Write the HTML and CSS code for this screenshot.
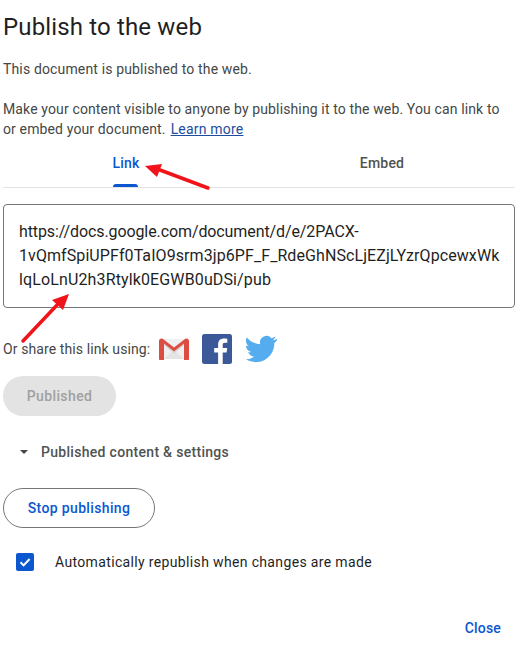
FILE: index.html
```html
<!DOCTYPE html>
<html lang="en">
<head>
<meta charset="utf-8">
<title>Publish to the web</title>
<link rel="stylesheet" href="styles.css">
</head>
<body>
<main class="dialog">
  <h1 class="title">Publish to the web</h1>
  <p class="status">This document is published to the web.</p>
  <div class="intro">
    <p class="intro-line">Make your content visible to anyone by publishing it to the web. You can link to</p>
    <p class="intro-line"><span>or embed your document.</span><a class="learn" href="#">Learn more</a></p>
  </div>
  <div class="tabs">
    <div class="tab tab-active"><span class="tab-label">Link</span></div>
    <div class="tab tab-other"><span class="tab-label">Embed</span></div>
  </div>
  <div class="linkbox"><span class="url-a">https://docs.google.com/document/d/e/2PACX-</span><br><span class="url-b">1vQmfSpiUPFf0TaIO9srm3jp6PF_F_RdeGhNScLjEZjLYzrQpcewxWk</span><br><span class="url-c">lqLoLnU2h3Rtylk0EGWB0uDSi/pub</span></div>
  <div class="share">
    <span class="share-text">Or share this link using:</span>
    <svg class="icon-gmail" viewBox="0 0 30 22" width="30" height="22" aria-label="Gmail">
      <path d="M2 1h26v20H2z" fill="#f0f0f0"/>
      <path d="M5 21 15 12l10 9z" fill="#e4e4e4"/>
      <path d="M5 5 15 14 25 5v2L15 15.500 5 7z" fill="#d4d4d4"/>
      <path d="M0 3c0-2 2-3 4-2l11 8.500L26 1c2-1 4 0 4 2v18c0 .6-.4 1-1 1h-4V5.500L15 13.500 5 5.500V22H1c-.6 0-1-.4-1-1z" fill="#dc4e41"/>
    </svg>
    <svg class="icon-fb" viewBox="0 0 30 30" width="30" height="30" aria-label="Facebook">
      <rect width="30" height="30" rx="2.500" fill="#3b5998"/>
      <path d="M20.700 30V18.400h3.900l.6-4.500h-4.500V11c0-1.300.4-2.200 2.200-2.200h2.400v-4c-.4-.1-1.800-.2-3.400-.2-3.400 0-5.800 2.100-5.800 5.900v3.400h-3.900v4.500h3.900V30z" fill="#fff"/>
    </svg>
    <svg class="icon-tw" viewBox="0 0 24 24" width="32" height="32" aria-label="Twitter">
      <path d="M23.600 4.600c-.9.4-1.800.7-2.800.8 1-.6 1.800-1.500 2.100-2.700-.9.6-2 1-3.100 1.200a4.900 4.900 0 0 0-8.400 4.500C7.400 8.200 3.800 6.200 1.400 3.300a4.900 4.900 0 0 0 1.500 6.600c-.8 0-1.600-.2-2.200-.6v.1c0 2.400 1.700 4.400 3.900 4.800-.7.2-1.500.2-2.200.1.600 2 2.400 3.400 4.600 3.400A9.900 9.900 0 0 1 .5 19.700a13.900 13.900 0 0 0 7.500 2.200c9 0 14-7.500 14-14v-.6c1-.7 1.800-1.600 2.500-2.600z" fill="#55acee"/>
    </svg>
  </div>
  <button class="btn-published" type="button">Published</button>
  <div class="disclosure">
    <span class="caret"></span>
    <span class="disclosure-text">Published content &amp; settings</span>
  </div>
  <button class="btn-stop" type="button">Stop publishing</button>
  <label class="auto">
    <span class="checkbox">
      <svg viewBox="0 0 18 18" width="18" height="18"><path d="M4.500 9.300 7.600 12.400 13.600 6" fill="none" stroke="#fff" stroke-width="2"/></svg>
    </span>
    <span class="auto-text">Automatically republish when changes are made</span>
  </label>
  <div class="footer"><a class="close" href="#">Close</a></div>

  <svg class="arrows" viewBox="0 0 518 648" width="518" height="648" aria-hidden="true">
    <path d="M208 188 160 170" stroke="#f0141a" stroke-width="3.500" stroke-linecap="round"/>
    <path d="M145 166 162 164 157 177z" fill="#f0141a"/>
    <path d="M23 341 58 304" stroke="#f0141a" stroke-width="3.500" stroke-linecap="round"/>
    <path d="M69 294 63 310 52 300z" fill="#f0141a"/>
  </svg>
</main>
</body>
</html>
```
FILE: styles.css
```css
* {
  box-sizing: border-box;
}

html,
body {
  margin: 0;
  background: #fff;
}

.dialog {
  position: relative;
  width: 518px;
  height: 648px;
  padding: 0 3px;
  overflow: hidden;
  font-family: Roboto, "Liberation Sans", sans-serif;
  font-size: 14px;
  letter-spacing: 0.2px;
  color: #444746;
}

.title {
  margin: 0;
  padding-top: 11px;
  font-size: 24px;
  font-weight: 400;
  line-height: 32px;
  letter-spacing: 0.15px;
  color: #1f1f1f;
}

.status {
  margin: 16px 0 0;
  line-height: 20px;
  letter-spacing: 0.15px;
}

.intro {
  margin: 20px 0 0;
  line-height: 20px;
  letter-spacing: 0.13px;
}

.intro-line {
  display: flex;
  gap: 5px;
  margin: 0;
}

.learn {
  letter-spacing: 0.2px;
  color: #1d4e9e;
}

.tabs {
  display: grid;
  grid-template-columns: 246px 266px;
  width: 512px;
  height: 49px;
  border-bottom: 1px solid #e3e3e3;
}

.tab {
  display: flex;
  justify-content: center;
  padding-top: 14px;
  font-weight: 500;
  line-height: 20px;
}

.tab-label {
  position: relative;
  height: 34px;
}

.tab-active {
  color: #0b57d0;
}

.tab-other {
  color: #505352;
}

.tab-active .tab-label::after {
  content: "";
  position: absolute;
  left: 1px;
  right: 2px;
  bottom: 0;
  height: 3px;
  border-radius: 3px 3px 0 0;
  background: #0b57d0;
}

.linkbox {
  width: 512px;
  height: 104px;
  margin-top: 16px;
  padding: 15px 15px;
  border: 1px solid #747775;
  border-radius: 4px;
  font-size: 16px;
  line-height: 24px;
  color: #1f1f1f;
  white-space: nowrap;
}

.url-a {
  letter-spacing: -0.1px;
}

.url-b {
  letter-spacing: 0.08px;
}

.url-c {
  letter-spacing: 0.13px;
}

.share {
  display: flex;
  align-items: center;
  height: 36px;
  margin-top: 23px;
}

.share-text {
  width: 156px;
  letter-spacing: 0.1px;
}

.icon-gmail {
  flex: none;
}

.icon-fb {
  flex: none;
  margin-left: 13px;
}

.icon-tw {
  flex: none;
  margin-left: 13px;
}

.btn-published,
.btn-stop {
  display: block;
  height: 40px;
  border-radius: 20px;
  font: 500 14px/20px Roboto, "Liberation Sans", sans-serif;
}

.btn-published {
  width: 113px;
  margin-top: 9px;
  padding: 0;
  border: 0;
  letter-spacing: 0.4px;
  background: #e3e3e3;
  color: #a0a0a0;
}

.disclosure {
  display: flex;
  align-items: center;
  height: 20px;
  margin-top: 26px;
  padding-left: 17px;
  font-weight: 500;
  letter-spacing: 0.3px;
  color: #505352;
}

.caret {
  width: 0;
  height: 0;
  border-left: 4px solid transparent;
  border-right: 4px solid transparent;
  border-top: 4px solid #444746;
}

.disclosure-text {
  margin-left: 13px;
}

.btn-stop {
  width: 152px;
  margin-top: 26px;
  padding: 0;
  border: 1px solid #747775;
  letter-spacing: 0.35px;
  background: #fff;
  color: #0b57d0;
}

.auto {
  display: flex;
  align-items: center;
  height: 18px;
  margin-top: 25px;
  padding-left: 13px;
  letter-spacing: 0.35px;
  color: #1f1f1f;
}

.checkbox {
  display: block;
  flex: none;
  width: 18px;
  height: 18px;
  border-radius: 2px;
  background: #0b57d0;
}

.checkbox svg {
  display: block;
}

.auto-text {
  margin-left: 21px;
}

.footer {
  display: flex;
  justify-content: flex-end;
  margin-top: 47px;
  padding-right: 14px;
  font-weight: 500;
  line-height: 20px;
}

.close {
  color: #0b57d0;
  text-decoration: none;
}

.arrows {
  position: absolute;
  left: 0;
  top: 0;
  pointer-events: none;
}
```
